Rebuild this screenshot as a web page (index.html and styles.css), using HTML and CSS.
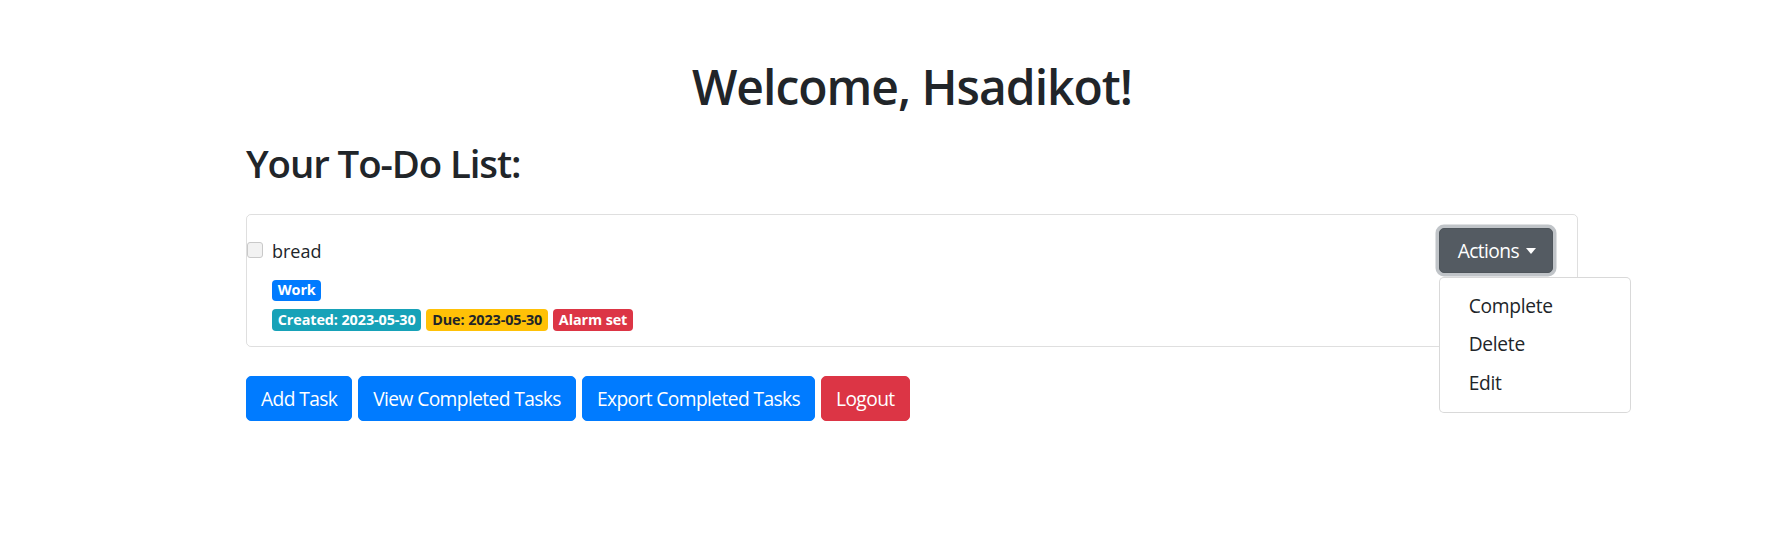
FILE: index.html
```html
<!DOCTYPE html>
<html lang="en">
<head>
<meta charset="utf-8">
<title>To-Do List</title>
<link rel="stylesheet" href="styles.css">
</head>
<body>
<div class="page">
  <h1 class="title">Welcome, Hsadikot!</h1>
  <h2 class="subtitle">Your To-Do List:</h2>
  <ul class="tasks">
    <li class="task">
      <div class="task-row">
        <label class="task-label"><input type="checkbox" class="check"><span class="task-name">bread</span></label>
        <div class="dropdown">
          <button class="btn btn-secondary btn-focus" type="button">Actions<span class="caret"></span></button>
          <div class="menu">
            <a class="menu-item" href="#">Complete</a>
            <a class="menu-item" href="#">Delete</a>
            <a class="menu-item" href="#">Edit</a>
          </div>
        </div>
      </div>
      <div class="badges">
        <div class="badge-row"><span class="badge badge-primary">Work</span></div>
        <div class="badge-row">
          <span class="badge badge-info">Created: 2023-05-30</span>
          <span class="badge badge-warning">Due: 2023-05-30</span>
          <span class="badge badge-danger">Alarm set</span>
        </div>
      </div>
    </li>
  </ul>
  <div class="toolbar">
    <a class="btn btn-primary" href="#">Add Task</a>
    <a class="btn btn-primary" href="#">View Completed Tasks</a>
    <a class="btn btn-primary" href="#">Export Completed Tasks</a>
    <a class="btn btn-danger" href="#">Logout</a>
  </div>
</div>
</body>
</html>
```
FILE: styles.css
```css
* { box-sizing: border-box; }

body {
  margin: 0;
  font-family: "Open Sans", "Noto Sans", sans-serif;
  font-size: 19.2px;
  line-height: 1.5;
  color: #212529;
  background: #fff;
}

.page {
  width: 1332px;
  margin-left: 246px;
  padding-top: 58px;
}

.title {
  margin: 0 0 24px;
  text-align: center;
  font-size: 48px;
  font-weight: 600;
  letter-spacing: -1px;
  line-height: 1.2;
}

.subtitle {
  margin: 0 0 28px;
  font-size: 38.4px;
  font-weight: 600;
  letter-spacing: -1.1px;
  line-height: 1.2;
}

.tasks {
  list-style: none;
  margin: 0;
  padding: 0;
}

.task {
  border: 1px solid rgba(0, 0, 0, 0.125);
  border-radius: 5px;
  padding: 13px 24px 15px 0;
}

.task-row {
  display: flex;
  align-items: center;
  justify-content: space-between;
}

.task-label {
  display: flex;
  align-items: center;
  font-size: 18px;
}

.check {
  appearance: none;
  -webkit-appearance: none;
  margin: 0 9px 0 0;
  width: 16px;
  height: 16px;
  border: 1px solid #c9c9c9;
  border-radius: 3px;
  background: #f2f2f2;
}

.task-name {
  line-height: 27px;
  padding-top: 3px;
}

.badges {
  margin-top: 7px;
  padding-left: 25px;
  display: flex;
  flex-direction: column;
  gap: 8px;
}

.badge-row {
  display: flex;
  gap: 5px;
}

.badge {
  display: inline-block;
  padding: 3.6px 5.8px;
  font-size: 14.4px;
  font-weight: 700;
  letter-spacing: -0.1px;
  line-height: 1;
  border-radius: 4px;
  color: #fff;
  white-space: nowrap;
}

.badge-primary { background: #007bff; }
.badge-info { background: #17a2b8; }
.badge-warning { background: #ffc107; color: #212529; }
.badge-danger { background: #dc3545; }

.dropdown {
  position: relative;
}

.btn {
  display: inline-block;
  height: 45px;
  padding: 0 14px;
  font-family: inherit;
  font-size: 19.2px;
  letter-spacing: -0.6px;
  line-height: 43px;
  border: 1px solid transparent;
  border-radius: 5px;
  color: #fff;
  text-decoration: none;
  cursor: pointer;
}

.btn-secondary {
  background: #545b62;
  border-color: #4e555b;
  padding: 0 16px 0 18px;
}

.btn-focus {
  box-shadow: 0 0 0 3.5px rgba(130, 138, 145, 0.5);
}

.caret {
  display: inline-block;
  margin-left: 7px;
  vertical-align: 4px;
  border-top: 6px solid #fff;
  border-left: 5.5px solid transparent;
  border-right: 5.5px solid transparent;
}

.menu {
  position: absolute;
  top: calc(100% + 4px);
  left: 0;
  width: 192px;
  padding: 9.6px 0;
  background: #fff;
  border: 1px solid rgba(0, 0, 0, 0.15);
  border-radius: 5px;
  z-index: 10;
}

.menu-item {
  display: block;
  padding: 4.8px 29px;
  line-height: 28.8px;
  font-size: 19.2px;
  letter-spacing: -0.3px;
  color: #212529;
  text-decoration: none;
}

.toolbar {
  margin-top: 29px;
  display: flex;
  gap: 6px;
}

.btn-primary { background: #007bff; border-color: #007bff; }
.btn-danger { background: #dc3545; border-color: #dc3545; }
```
